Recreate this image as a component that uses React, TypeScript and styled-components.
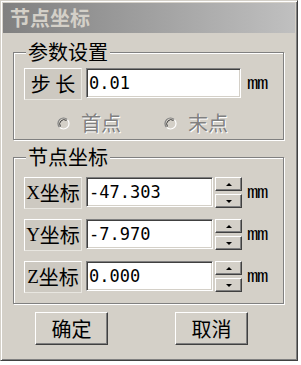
import React from 'react';
import styled, { createGlobalStyle } from 'styled-components';

const cjk = `"Noto Sans CJK SC", "Noto Sans CJK JP", sans-serif`;
const mono = `"DejaVu Sans Mono", "Liberation Mono", monospace`;

const GlobalStyle = createGlobalStyle`
  html, body {
    margin: 0;
    padding: 0;
    background: #fff;
  }
  body {
    font-family: ${cjk};
  }
`;

const Window = styled.div`
  width: 298px;
  height: 361px;
  box-sizing: border-box;
  background: #d4d0c8;
  border: 1px solid;
  border-color: #d4d0c8 #404040 #404040 #d4d0c8;
  box-shadow: inset 1px 1px 0 #fff, inset -1px -1px 0 #808080;
  padding: 2px;
  display: flex;
  flex-direction: column;
`;

const TitleBar = styled.div`
  height: 30px;
  flex: none;
  background: linear-gradient(90deg, #808080, #c0c0c0);
  color: #d4d0c8;
  font-family: ${cjk};
  font-weight: 700;
  font-size: 20px;
  line-height: 30px;
  padding-left: 7px;
`;

const Body = styled.div`
  flex: 1;
  display: flex;
  flex-direction: column;
  padding: 0 11px 0 10px;
`;

const Group = styled.fieldset<{ $top: number }>`
  margin: ${(p) => p.$top}px 0 0 0;
  padding: 0;
  min-width: 0;
  border: 1px solid #808080;
  box-shadow: inset 1px 1px 0 #fff, 1px 1px 0 #fff;
`;

const Legend = styled.legend`
  margin-left: 12px;
  padding: 0 2px;
  background: #d4d0c8;
  font-family: ${cjk};
  font-size: 20px;
  line-height: 20px;
  height: 20px;
  color: #000;
`;

const GroupInner = styled.div<{ $pt: number; $pb: number }>`
  display: flex;
  flex-direction: column;
  gap: 10px;
  padding: ${(p) => p.$pt}px 0 ${(p) => p.$pb}px 10px;
`;

const Row = styled.div`
  display: flex;
  align-items: flex-start;
  height: 32px;
`;

const FieldLabel = styled.div`
  width: 58px;
  height: 32px;
  box-sizing: border-box;
  flex: none;
  display: flex;
  align-items: center;
  justify-content: center;
  background: #cdc9c1;
  border: 1px solid;
  border-color: #fff #e8e6e0 #e8e6e0 #fff;
  font-family: ${cjk};
  font-size: 20px;
  line-height: 20px;
  white-space: pre;
  color: #000;
`;

const Latin = styled.span`
  font-family: "Liberation Serif", serif;
  font-size: 19px;
`;

const TextBox = styled.div<{ $w: number }>`
  width: ${(p) => p.$w}px;
  height: 30px;
  box-sizing: border-box;
  flex: none;
  margin-left: 4px;
  background: #fff;
  border: 1px solid;
  border-color: #808080 #fff #fff #808080;
  box-shadow: inset 1px 1px 0 #404040, inset -1px -1px 0 #d4d0c8;
  padding-left: 2px;
  font-family: ${mono};
  font-size: 17px;
  line-height: 28px;
  color: #000;
  white-space: pre;
`;

const Spinner = styled.div`
  display: flex;
  flex-direction: column;
  gap: 3px;
  margin-left: 2px;
  flex: none;
`;

const SpinButton = styled.div`
  width: 27px;
  height: 14px;
  box-sizing: border-box;
  background: #d4d0c8;
  border: 1px solid;
  border-color: #fff #404040 #404040 #fff;
  box-shadow: inset -1px -1px 0 #808080;
  display: flex;
  align-items: center;
  justify-content: center;
`;

const Arrow = styled.span<{ $up: boolean }>`
  width: 0;
  height: 0;
  border-left: 3px solid transparent;
  border-right: 3px solid transparent;
  ${(p) =>
    p.$up ? 'border-bottom: 3px solid #000;' : 'border-top: 3px solid #000;'}
`;

const Unit = styled.div<{ $ml: number }>`
  margin-left: ${(p) => p.$ml}px;
  align-self: center;
  font-family: "Liberation Mono", monospace;
  font-size: 19px;
  letter-spacing: -1.5px;
  color: #000;
`;

const RadioRow = styled.div`
  display: flex;
  align-items: center;
  height: 20px;
  margin-top: 3px;
  padding-left: 33px;
`;

const RadioItem = styled.div<{ $ml: number }>`
  display: flex;
  align-items: center;
  gap: 11px;
  margin-left: ${(p) => p.$ml}px;
`;

const RadioText = styled.span`
  font-family: ${cjk};
  font-size: 20px;
  line-height: 20px;
  color: #808080;
  text-shadow: 1px 1px 0 #fff;
`;

const ButtonRow = styled.div`
  display: flex;
  gap: 67px;
  padding-left: 22px;
  margin-top: 8px;
`;

const PushButton = styled.div`
  width: 73px;
  height: 33px;
  box-sizing: border-box;
  background: #d4d0c8;
  border: 1px solid;
  border-color: #fff #404040 #404040 #fff;
  box-shadow: inset -1px -1px 0 #808080;
  display: flex;
  align-items: center;
  justify-content: center;
  font-family: ${cjk};
  font-size: 20px;
  color: #000;
`;

function RadioDot() {
  return (
    <svg width="13" height="13" viewBox="0 0 13 13">
      <circle cx="6.5" cy="6.5" r="5.5" fill="#d4d0c8" />
      <path d="M10.4 2.6 A5.5 5.5 0 0 0 2.6 10.4" fill="none" stroke="#808080" strokeWidth="1.2" />
      <path d="M9.5 3.5 A4.3 4.3 0 0 0 3.5 9.5" fill="none" stroke="#404040" strokeWidth="1" />
      <path d="M2.6 10.4 A5.5 5.5 0 0 0 10.4 2.6" fill="none" stroke="#fff" strokeWidth="1.2" />
    </svg>
  );
}

function CoordRow({ axis, value }: { axis: string; value: string }) {
  return (
    <Row>
      <FieldLabel>
        <Latin>{axis}</Latin>坐标
      </FieldLabel>
      <TextBox $w={127}>{value}</TextBox>
      <Spinner>
        <SpinButton>
          <Arrow $up />
        </SpinButton>
        <SpinButton>
          <Arrow $up={false} />
        </SpinButton>
      </Spinner>
      <Unit $ml={5}>mm</Unit>
    </Row>
  );
}

export default function App() {
  return (
    <>
      <GlobalStyle />
      <Window>
        <TitleBar>节点坐标</TitleBar>
        <Body>
          <Group $top={9}>
            <Legend>参数设置</Legend>
            <GroupInner $pt={6} $pb={6}>
              <Row>
                <FieldLabel>{'步 长'}</FieldLabel>
                <TextBox $w={155}>0.01</TextBox>
                <Unit $ml={6}>mm</Unit>
              </Row>
              <RadioRow>
                <RadioItem $ml={0}>
                  <RadioDot />
                  <RadioText>首点</RadioText>
                </RadioItem>
                <RadioItem $ml={43}>
                  <RadioDot />
                  <RadioText>末点</RadioText>
                </RadioItem>
              </RadioRow>
            </GroupInner>
          </Group>
          <Group $top={7}>
            <Legend>节点坐标</Legend>
            <GroupInner $pt={10} $pb={10}>
              <CoordRow axis="X" value="-47.303" />
              <CoordRow axis="Y" value="-7.970" />
              <CoordRow axis="Z" value="0.000" />
            </GroupInner>
          </Group>
          <ButtonRow>
            <PushButton>确定</PushButton>
            <PushButton>取消</PushButton>
          </ButtonRow>
        </Body>
      </Window>
    </>
  );
}
